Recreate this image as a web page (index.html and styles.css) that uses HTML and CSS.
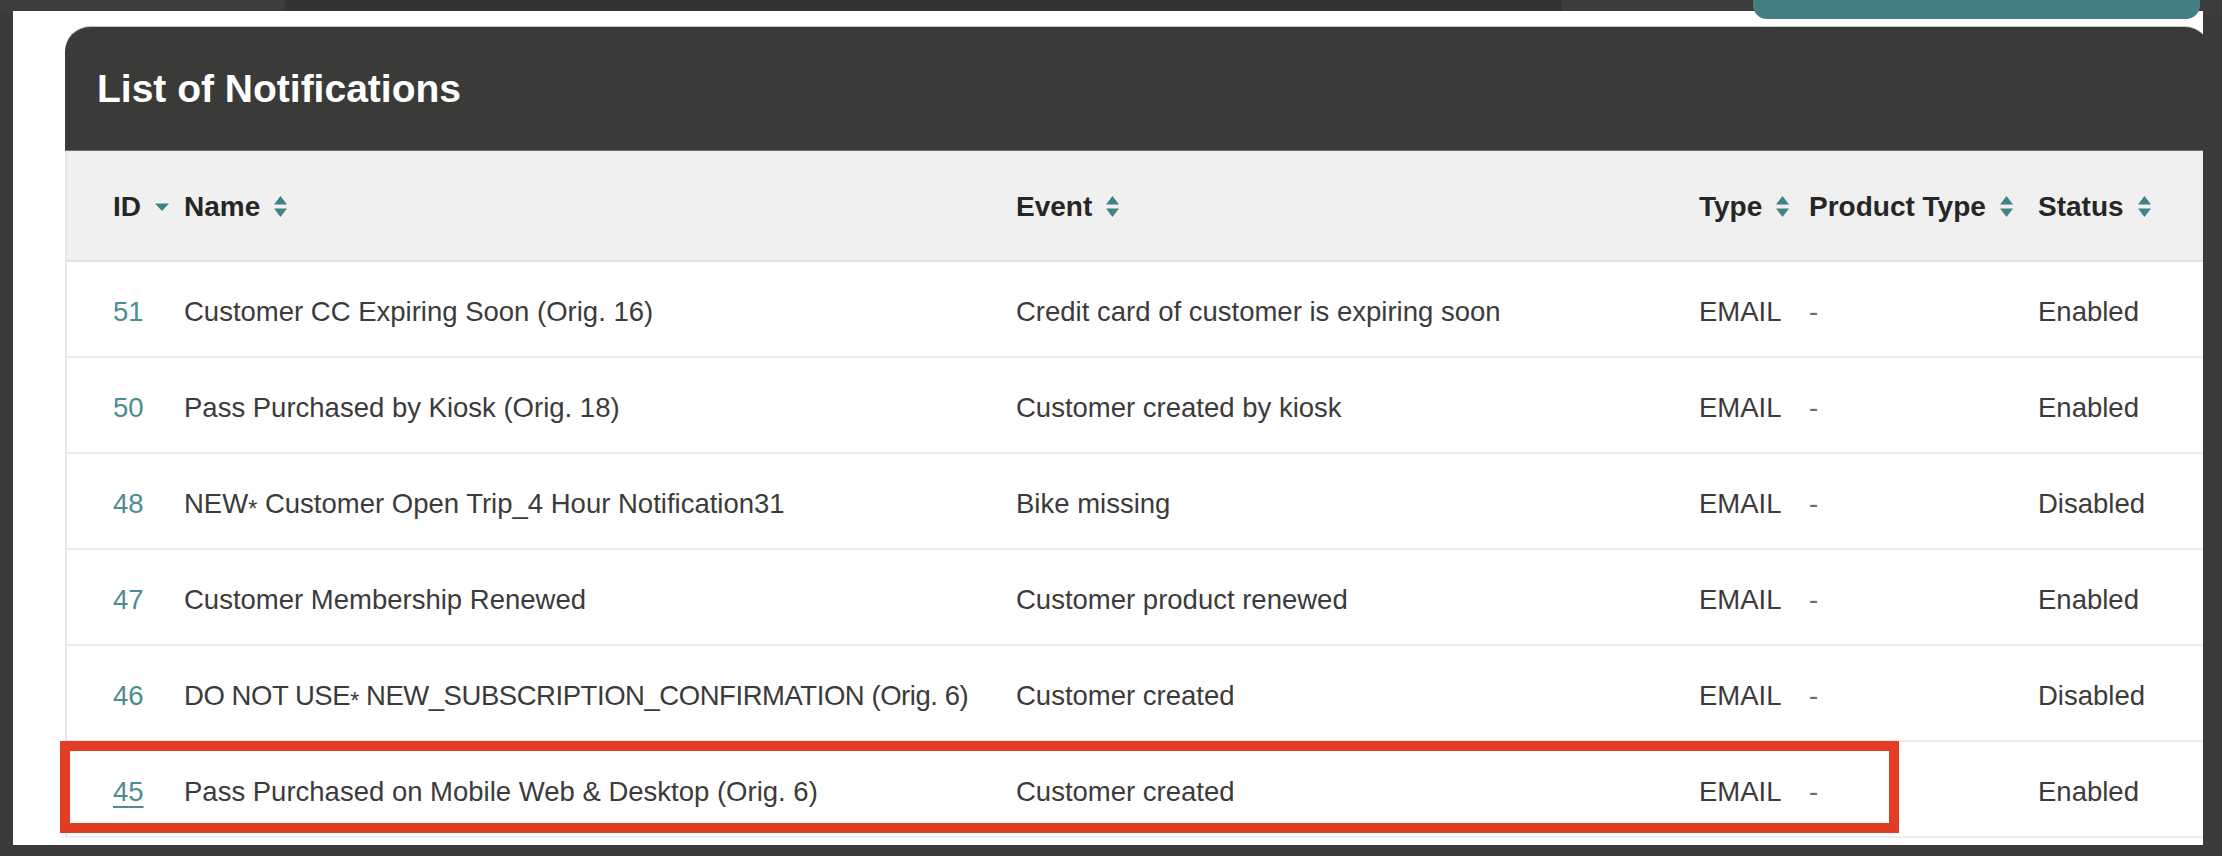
FILE: index.html
```html
<!DOCTYPE html>
<html lang="en">
<head>
<meta charset="utf-8">
<title>List of Notifications</title>
<link rel="stylesheet" href="styles.css">
</head>
<body>
<div class="top-strip">
  <div class="seg seg-a"></div>
  <div class="seg seg-b"></div>
  <div class="seg seg-c"></div>
</div>
<div class="top-button"></div>
<div class="screen">
  <section class="card">
    <header class="card-head"><h1>List of Notifications</h1></header>
    <div class="table">
      <div class="row head">
        <div class="th">ID <svg class="caret" width="16" height="10" viewBox="0 0 16 10"><path d="M1 1.5h14L8 9z"/></svg></div>
        <div class="th">Name <svg class="sort" width="15" height="23" viewBox="0 0 15 23"><path d="M7.5 1L14 9.5H1z"/><path d="M1 13.5h13L7.5 22z"/></svg></div>
        <div class="th">Event <svg class="sort" width="15" height="23" viewBox="0 0 15 23"><path d="M7.5 1L14 9.5H1z"/><path d="M1 13.5h13L7.5 22z"/></svg></div>
        <div class="th">Type <svg class="sort" width="15" height="23" viewBox="0 0 15 23"><path d="M7.5 1L14 9.5H1z"/><path d="M1 13.5h13L7.5 22z"/></svg></div>
        <div class="th">Product Type <svg class="sort" width="15" height="23" viewBox="0 0 15 23"><path d="M7.5 1L14 9.5H1z"/><path d="M1 13.5h13L7.5 22z"/></svg></div>
        <div class="th">Status <svg class="sort" width="15" height="23" viewBox="0 0 15 23"><path d="M7.5 1L14 9.5H1z"/><path d="M1 13.5h13L7.5 22z"/></svg></div>
      </div>
      <div class="rows">
        <div class="row">
          <div class="id"><a>51</a></div>
          <div>Customer CC Expiring Soon (Orig. 16)</div>
          <div>Credit card of customer is expiring soon</div>
          <div>EMAIL</div>
          <div class="dash">-</div>
          <div>Enabled</div>
        </div>
        <div class="row">
          <div class="id"><a>50</a></div>
          <div>Pass Purchased by Kiosk (Orig. 18)</div>
          <div>Customer created by kiosk</div>
          <div>EMAIL</div>
          <div class="dash">-</div>
          <div>Enabled</div>
        </div>
        <div class="row">
          <div class="id"><a>48</a></div>
          <div>NEW<span class="ast">*</span> Customer Open Trip_4 Hour Notification31</div>
          <div>Bike missing</div>
          <div>EMAIL</div>
          <div class="dash">-</div>
          <div>Disabled</div>
        </div>
        <div class="row">
          <div class="id"><a>47</a></div>
          <div>Customer Membership Renewed</div>
          <div>Customer product renewed</div>
          <div>EMAIL</div>
          <div class="dash">-</div>
          <div>Enabled</div>
        </div>
        <div class="row">
          <div class="id"><a>46</a></div>
          <div class="caps">DO NOT USE<span class="ast">*</span> NEW_SUBSCRIPTION_CONFIRMATION (Orig. 6)</div>
          <div>Customer created</div>
          <div>EMAIL</div>
          <div class="dash">-</div>
          <div>Disabled</div>
        </div>
        <div class="row">
          <div class="id"><a class="link">45</a></div>
          <div>Pass Purchased on Mobile Web &amp; Desktop (Orig. 6)</div>
          <div>Customer created</div>
          <div>EMAIL</div>
          <div class="dash">-</div>
          <div>Enabled</div>
        </div>
        <div class="highlight"></div>
      </div>
    </div>
  </section>
</div>
</body>
</html>
```

FILE: styles.css
```css
* { box-sizing: border-box; }

html, body {
  margin: 0;
  padding: 0;
}

body {
  width: 2222px;
  height: 856px;
  overflow: hidden;
  background: #3b3b3b;
  font-family: "Liberation Sans", Arial, sans-serif;
  position: relative;
}

.top-strip {
  display: flex;
  height: 11px;
}

.seg { height: 100%; }
.seg-a { width: 285px; background: #3e3e3e; border-bottom-right-radius: 10px; }
.seg-b { width: 1277px; background: #333333; }
.seg-c { flex: 1; background: #3c3c3c; }

.top-button {
  position: absolute;
  top: 0;
  left: 1753px;
  width: 447px;
  height: 19px;
  background: #437e84;
  border-radius: 0 0 14px 14px;
  z-index: 2;
}

.screen {
  margin-left: 13px;
  width: 2190px;
  height: 834px;
  background: #ffffff;
  overflow: hidden;
  padding: 16px 0 0 52px;
}

.card {
  width: 2145px;
}

.card-head {
  height: 124px;
  background: #3a3a38;
  border-radius: 25px 25px 0 0;
  display: flex;
  align-items: center;
  padding-left: 32px;
  border-bottom: 1px solid #707070;
  box-shadow: 0 -1px 0 #c2c2c2;
}

.card-head h1 {
  margin: 0;
  color: #ffffff;
  font-size: 39px;
  font-weight: 700;
  letter-spacing: 0;
}

.table {
  border-left: 2px solid #e6e6e6;
}

.row {
  display: grid;
  grid-template-columns: 71px 832px 683px 110px 229px 1fr;
  align-items: center;
  padding-left: 46px;
  padding-top: 5px;
  height: 96px;
  border-bottom: 2px solid #ececec;
  font-size: 27.5px;
  color: #3b3b3b;
  white-space: nowrap;
}

.row.head {
  height: 111px;
  padding-top: 2px;
  background: #f0f0f0;
  border-bottom: 2px solid #e0e0e0;
  font-size: 28px;
  font-weight: 700;
  color: #262626;
}

.th {
  display: flex;
  align-items: center;
  gap: 13px;
}

.th svg { fill: #3f8288; flex: none; }

.id a {
  color: #4a8d93;
  text-decoration: none;
}

.id a.link {
  text-decoration: underline;
  text-decoration-thickness: 2px;
  text-underline-offset: 5px;
}

.caps {
  letter-spacing: -0.45px;
}

.dash {
  color: #6a6a6a;
}

.ast {
  font-size: 0.85em;
  position: relative;
  top: 0.18em;
}

.rows {
  position: relative;
}

.highlight {
  position: absolute;
  left: -7px;
  top: 479px;
  width: 1839px;
  height: 92px;
  border: 10px solid #e03d24;
}
```
